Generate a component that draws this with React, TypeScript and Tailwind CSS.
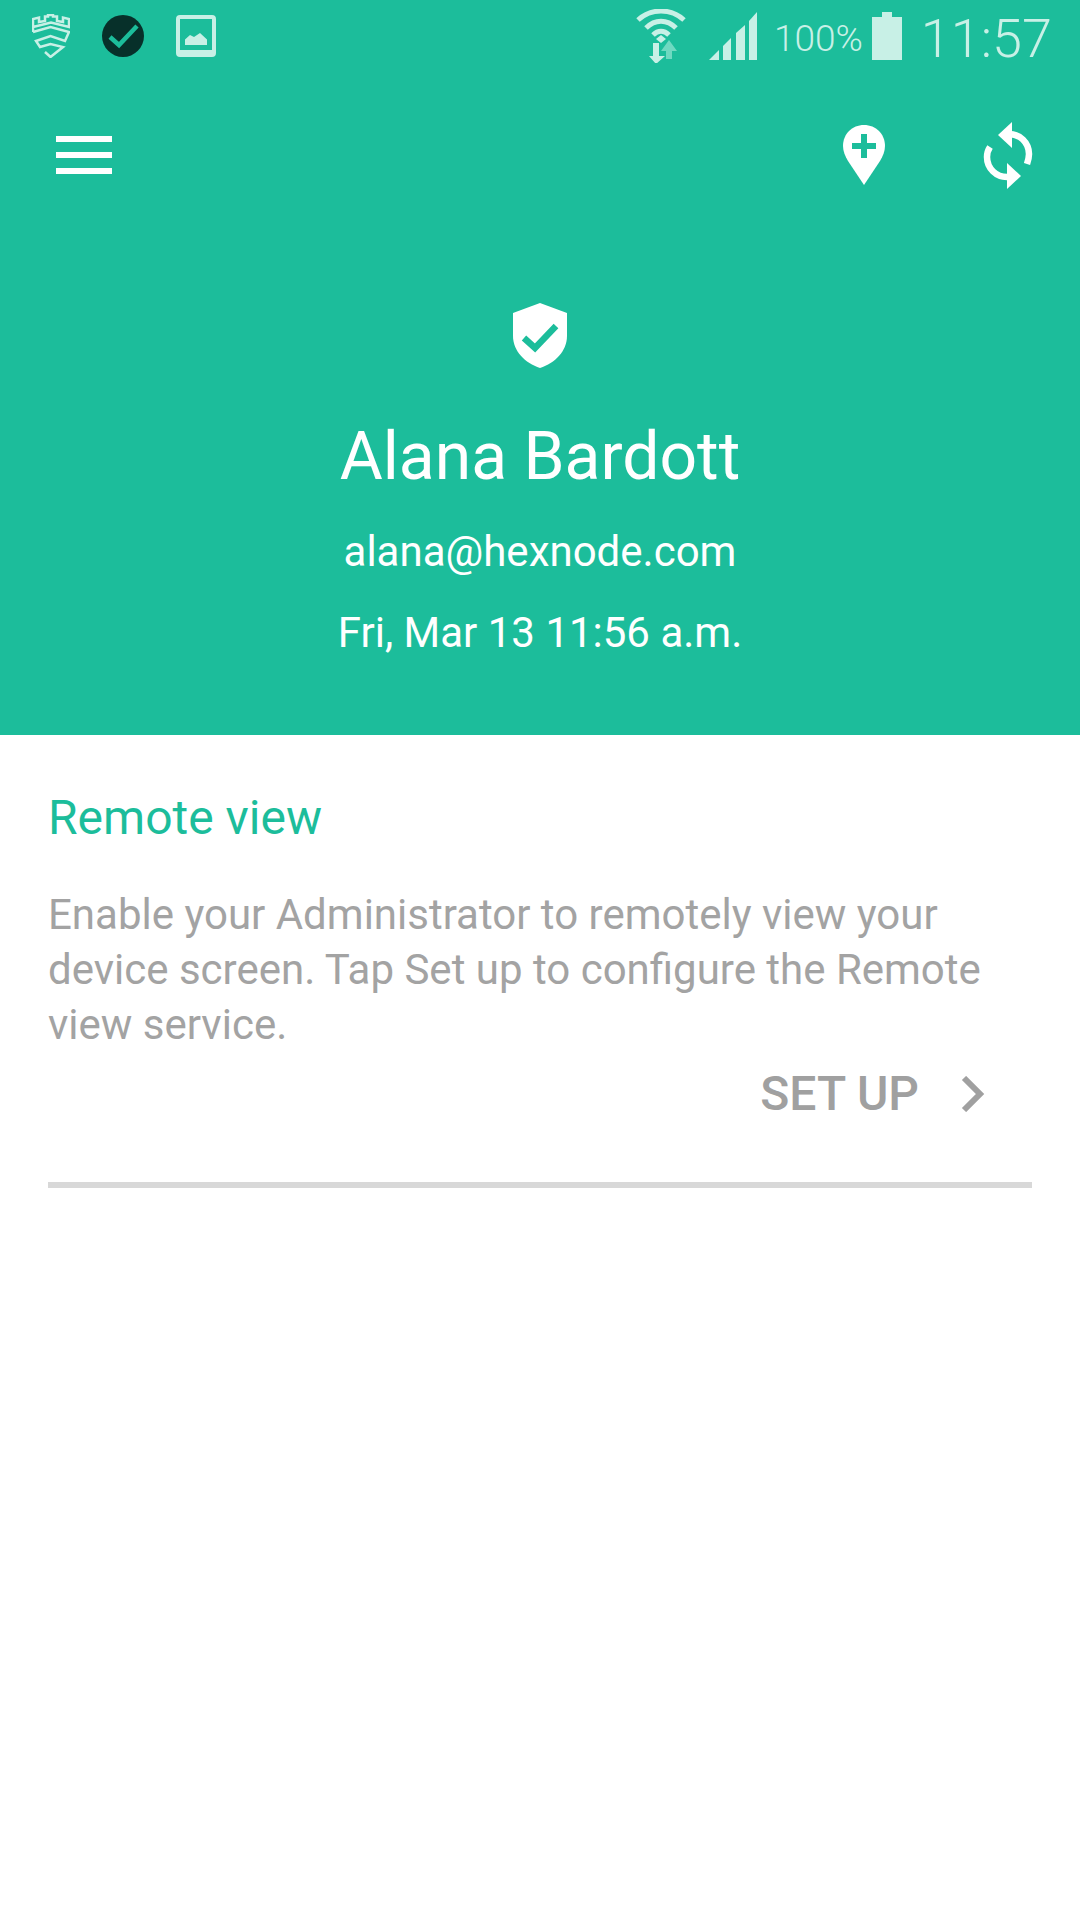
const statusTint = '#c8f0e6'

function ShieldCastleIcon() {
  return (
    <svg width="38" height="44" viewBox="0 0 38 44" fill="none" stroke={statusTint} strokeWidth="2.500">
      <path d="M1 18V5L7 3.500V8L13 7V2.500H16V1H21V2.500H25V7L31 8V3.500L37 5V13L19 8.500 1 13" />
      <path d="M1 18L18.500 13 37 18 33 27 18.500 22 4 27 8 33 18.500 30 31 33 18.500 43 13 38" />
    </svg>
  )
}

function CheckCircleIcon() {
  return (
    <svg width="42" height="42" viewBox="0 0 42 42">
      <circle cx="21" cy="21" r="21" fill="#07302a" />
      <path d="M8 22L17 30 35 11" fill="none" stroke="#1cbd9b" strokeWidth="4.500" />
    </svg>
  )
}

function PictureIcon() {
  return (
    <svg width="40" height="42" viewBox="0 0 40 42">
      <path
        fillRule="evenodd"
        fill={statusTint}
        d="M4 0h32a4 4 0 0 1 4 4v34a4 4 0 0 1-4 4H4a4 4 0 0 1-4-4V4a4 4 0 0 1 4-4zM4 4v31h32V4z"
      />
      <path fill={statusTint} d="M9 30V24.500L14 20 18 22 24 18 31 24.500V30z" />
    </svg>
  )
}

function WifiIcon() {
  return (
    <svg width="50" height="54" viewBox="0 0 50 54" fill="none">
      <path d="M2 11C15-1 35-1 48 11" stroke={statusTint} strokeWidth="5" />
      <path d="M10 19C19 10 31 10 40 19" stroke={statusTint} strokeWidth="5" />
      <path d="M17 26C22 21 28 21 33 26" stroke={statusTint} strokeWidth="5" />
      <path d="M20 30L25 26 30 30 25 34z" fill={statusTint} />
      <path d="M33 31L41 42H36V50H30V42H25z" fill="#6fd9c1" />
      <path d="M17 34H23V47H29L20 55 13 47H17z" fill={statusTint} />
    </svg>
  )
}

function SignalIcon() {
  return (
    <svg width="48" height="48" viewBox="0 0 48 48" fill={statusTint}>
      <path d="M0 48L10 38V48z" />
      <path d="M14 34L22 26V48H14z" />
      <path d="M27 21L36 13V48H27z" />
      <path d="M40 9L48 0V48H40z" />
    </svg>
  )
}

function BatteryIcon() {
  return (
    <svg width="30" height="48" viewBox="0 0 30 48" fill={statusTint}>
      <path d="M10 0H20V5H30V48H0V5H10z" />
    </svg>
  )
}

function PinPlusIcon() {
  return (
    <svg width="42" height="60" viewBox="0 0 42 60">
      <path
        fill="#fff"
        d="M21 0C9 0 0 9 0 21c0 5 2 10 5 15l16 24 16-24c3-5 5-10 5-15C42 9 33 0 21 0z"
      />
      <path fill="#1cbd9b" d="M18 9h6v9h9v6h-9v9h-6v-9H9v-6h9z" />
    </svg>
  )
}

function SyncIcon() {
  return (
    <svg width="50" height="67" viewBox="0 0 50 67" fill="none">
      <path d="M24 12C37 11 46 21 46 32c0 4-1 7-2 10" stroke="#fff" strokeWidth="6.500" />
      <path d="M26 55C13 56 4 46 4 35c0-4 1-7 3-10" stroke="#fff" strokeWidth="6.500" />
      <path d="M29 0V26L15 13z" fill="#fff" />
      <path d="M24 41V67L38 54z" fill="#fff" />
    </svg>
  )
}

function ShieldCheckIcon() {
  return (
    <svg width="54" height="65" viewBox="0 0 54 65">
      <path fill="#fff" d="M27 0L54 10V33C54 48 42 60 27 65 12 60 0 48 0 33V10z" />
      <path d="M11 35L22 45 43 23" fill="none" stroke="#1cbd9b" strokeWidth="6.500" />
    </svg>
  )
}

function App() {
  return (
    <main className="min-h-screen w-[1080px] bg-white font-['Roboto',sans-serif]">
      <header className="flex h-[735px] flex-col bg-[#1cbd9b] text-white">
        <div className="flex h-[72px] items-center justify-between pl-8 pr-[28px]">
          <div className="flex items-center gap-[32px]">
            <ShieldCastleIcon />
            <CheckCircleIcon />
            <PictureIcon />
          </div>
          <div className="flex items-center text-[#c8f0e6]">
            <WifiIcon />
            <div className="ml-[23px]">
              <SignalIcon />
            </div>
            <span className="ml-[17px] mt-[4px] text-[37px] font-light leading-none">100%</span>
            <div className="ml-[9px]">
              <BatteryIcon />
            </div>
            <span className="ml-[19px] mt-[6px] text-[54px] font-light leading-none">11:57</span>
          </div>
        </div>

        <div className="mt-[48px] flex h-[70px] items-center justify-between pl-14 pr-[47px]">
          <div className="flex w-14 flex-col gap-[10px]">
            <div className="h-[6px] bg-white" />
            <div className="h-[6px] bg-white" />
            <div className="h-[6px] bg-white" />
          </div>
          <div className="flex items-center gap-[98px]">
            <PinPlusIcon />
            <SyncIcon />
          </div>
        </div>

        <div className="mt-[113px] flex flex-col items-center">
          <ShieldCheckIcon />
          <h1 className="mt-[51px] text-[66px] leading-[76px]">Alana Bardott</h1>
          <p className="mt-[33px] text-[42px] leading-[47px]">alana@hexnode.com</p>
          <p className="mt-[34px] text-[42px] leading-[47px]">Fri, Mar 13 11:56 a.m.</p>
        </div>
      </header>

      <section className="px-12 pt-[55px]">
        <h2 className="text-[48px] leading-[56px] text-[#1cbd9b]">Remote view</h2>
        <p className="mt-[41px] text-[42px] leading-[55px] text-[#a3a3a3]">
          Enable your Administrator to remotely view your device screen. Tap Set up to configure the Remote view
          service.
        </p>
        <div className="mt-[14px] flex items-center justify-end pr-[47px] text-[#a0a0a0]">
          <span className="text-[48px] font-medium leading-[56px]">SET UP</span>
          <svg className="ml-[42px]" width="24" height="36" viewBox="0 0 24 36" fill="none">
            <path d="M3 2L19 18 3 34" stroke="#a0a0a0" strokeWidth="6" />
          </svg>
        </div>
        <div className="mt-[60px] h-[6px] bg-[#d8d8d8]" />
      </section>
    </main>
  )
}

export default App
